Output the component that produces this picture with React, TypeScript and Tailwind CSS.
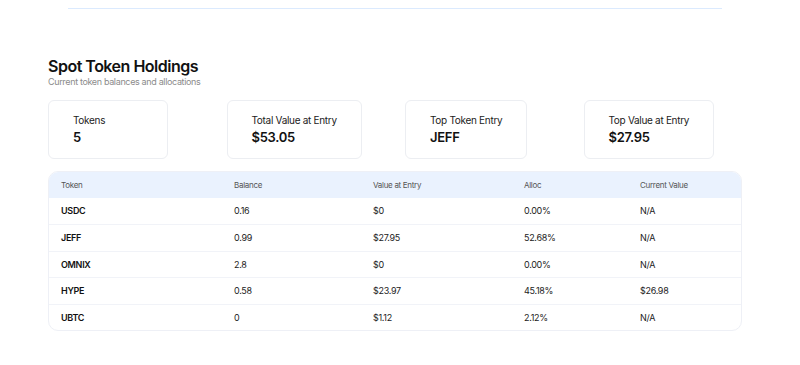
const stats = [
  { label: "Tokens", value: "5" },
  { label: "Total Value at Entry", value: "$53.05" },
  { label: "Top Token Entry", value: "JEFF" },
  { label: "Top Value at Entry", value: "$27.95" },
];

const rows = [
  { token: "USDC", balance: "0.16", entry: "$0", alloc: "0.00%", current: "N/A" },
  { token: "JEFF", balance: "0.99", entry: "$27.95", alloc: "52.68%", current: "N/A" },
  { token: "OMNIX", balance: "2.8", entry: "$0", alloc: "0.00%", current: "N/A" },
  { token: "HYPE", balance: "0.58", entry: "$23.97", alloc: "45.18%", current: "$26.98" },
  { token: "UBTC", balance: "0", entry: "$1.12", alloc: "2.12%", current: "N/A" },
];

const cols = "grid grid-cols-[173px_139px_151px_116px_1fr] px-3";

const App = () => {
  return (
    <div className="w-[800px] h-[365px] bg-white font-['Inter',sans-serif] text-[#111] tracking-[-0.3px]">
      <div className="pt-2 px-[68px] w-[790px]">
        <div className="border-t border-[#dbeafe]" />
      </div>

      <div className="ml-[48px] w-[694px] pt-[47px]">
        {/* heading */}
        <h2 className="text-[16px] leading-[20px] font-semibold tracking-[-0.5px]">Spot Token Holdings</h2>
        <p className="text-[9px] leading-[12px] text-[#8b8b8b] tracking-[-0.35px]">Current token balances and allocations</p>

        {/* stat cards */}
        <div className="grid grid-cols-4 gap-5 mt-[12px]">
          {stats.map((s) => (
            <div
              key={s.label}
              className="justify-self-start min-w-[120px] h-[59px] px-6 pt-[13px] border border-[#eceef2] rounded-md"
            >
              <div className="text-[10px] leading-[13px] text-[#222]">{s.label}</div>
              <div className="text-[13px] leading-[16px] font-semibold mt-[2px]">{s.value}</div>
            </div>
          ))}
        </div>

        {/* table */}
        <div className="mt-3 border border-[#eef0f6] rounded-[10px] overflow-hidden">
          <div className={`${cols} h-[26px] items-center bg-[#eaf2fe] text-[8px] text-[#555]`}>
            <div>Token</div>
            <div>Balance</div>
            <div>Value at Entry</div>
            <div>Alloc</div>
            <div>Current Value</div>
          </div>
          {rows.map((r, i) => (
            <div
              key={r.token}
              className={`${cols} h-[26.4px] items-center text-[9px] text-[#222] ${i > 0 ? "border-t border-[#f1f3f8]" : ""}`}
            >
              <div className="font-semibold text-[#111]">{r.token}</div>
              <div>{r.balance}</div>
              <div>{r.entry}</div>
              <div>{r.alloc}</div>
              <div>{r.current}</div>
            </div>
          ))}
        </div>
      </div>
    </div>
  );
};

export default App;
